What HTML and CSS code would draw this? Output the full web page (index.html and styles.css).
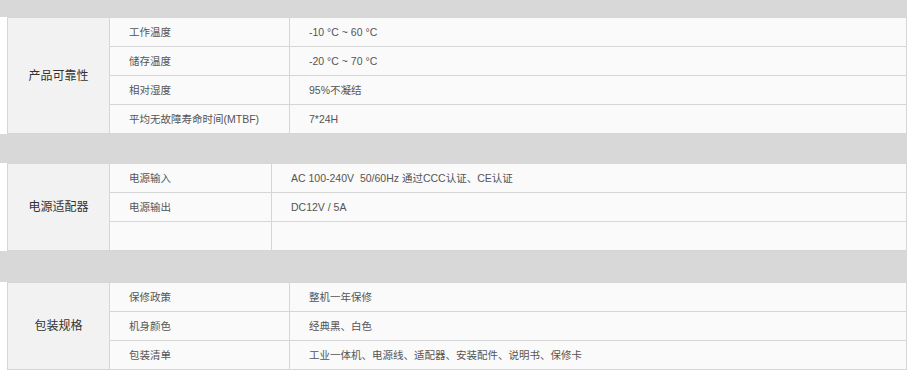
FILE: index.html
```html
<!DOCTYPE html>
<html lang="zh-CN">
<head>
<meta charset="utf-8">
<title>参数</title>
<link rel="stylesheet" href="styles.css">
</head>
<body>
<div class="spec">
  <div class="band band-top"></div>
  <table class="grid">
    <colgroup><col class="c1"><col class="c2"><col></colgroup>
    <tr><th rowspan="4">产品可靠性</th><td class="k">工作温度</td><td class="v">-10 °C ~ 60 °C</td></tr>
    <tr><td class="k">储存温度</td><td class="v">-20 °C ~ 70 °C</td></tr>
    <tr><td class="k">相对湿度</td><td class="v">95%不凝结</td></tr>
    <tr><td class="k">平均无故障寿命时间(MTBF)</td><td class="v">7*24H</td></tr>
  </table>
  <div class="band"></div>
  <table class="grid">
    <colgroup><col class="c1"><col class="c2n"><col></colgroup>
    <tr><th rowspan="3">电源适配器</th><td class="k">电源输入</td><td class="v">AC 100-240V&nbsp; 50/60Hz 通过CCC认证、CE认证</td></tr>
    <tr><td class="k">电源输出</td><td class="v">DC12V / 5A</td></tr>
    <tr><td class="k"></td><td class="v"></td></tr>
  </table>
  <div class="band band-tall"></div>
  <table class="grid">
    <colgroup><col class="c1"><col class="c2"><col></colgroup>
    <tr><th rowspan="3">包装规格</th><td class="k">保修政策</td><td class="v">整机一年保修</td></tr>
    <tr><td class="k">机身颜色</td><td class="v">经典黑、白色</td></tr>
    <tr><td class="k">包装清单</td><td class="v">工业一体机、电源线、适配器、安装配件、说明书、保修卡</td></tr>
  </table>
</div>
</body>
</html>
```

FILE: styles.css
```css
html, body {
  margin: 0;
  padding: 0;
  background: #ffffff;
}
body {
  font-family: "Liberation Sans", Arial, "Noto Sans CJK SC", sans-serif;
  font-size: 10.5px;
  color: #555555;
}
.spec {
  width: 907px;
}
.band {
  height: 29px;
  background: #d8d8d8;
}
.band-top {
  height: 17px;
}
.band-tall {
  height: 31px;
}
.grid {
  margin-left: 7px;
  width: 900px;
  border-collapse: collapse;
  table-layout: fixed;
}
.c1 { width: 102px; }
.c2 { width: 180px; }
.c2n { width: 162px; }
.grid th,
.grid td {
  border: 1px solid #d6d6d6;
  height: 29px;
  padding: 0 19px;
  box-sizing: border-box;
  text-align: left;
  vertical-align: middle;
  white-space: nowrap;
  line-height: 16px;
}
.grid th {
  background: #f2f2f2;
  font-weight: normal;
  font-size: 12px;
  color: #333333;
  text-align: center;
  padding: 0;
}
.grid td.k,
.grid td.v {
  background: #fafafa;
}
```
